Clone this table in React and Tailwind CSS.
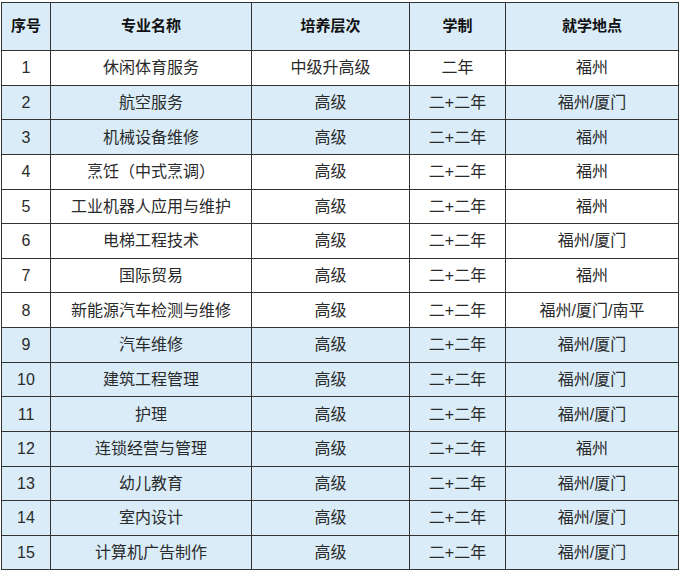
const headers = ['序号', '专业名称', '培养层次', '学制', '就学地点'];

const rows = [
  ['1', '休闲体育服务', '中级升高级', '二年', '福州', false],
  ['2', '航空服务', '高级', '二+二年', '福州/厦门', true],
  ['3', '机械设备维修', '高级', '二+二年', '福州', true],
  ['4', '烹饪（中式烹调）', '高级', '二+二年', '福州', false],
  ['5', '工业机器人应用与维护', '高级', '二+二年', '福州', false],
  ['6', '电梯工程技术', '高级', '二+二年', '福州/厦门', false],
  ['7', '国际贸易', '高级', '二+二年', '福州', false],
  ['8', '新能源汽车检测与维修', '高级', '二+二年', '福州/厦门/南平', false],
  ['9', '汽车维修', '高级', '二+二年', '福州/厦门', true],
  ['10', '建筑工程管理', '高级', '二+二年', '福州/厦门', true],
  ['11', '护理', '高级', '二+二年', '福州/厦门', true],
  ['12', '连锁经营与管理', '高级', '二+二年', '福州', true],
  ['13', '幼儿教育', '高级', '二+二年', '福州/厦门', true],
  ['14', '室内设计', '高级', '二+二年', '福州/厦门', true],
  ['15', '计算机广告制作', '高级', '二+二年', '福州/厦门', true],
];

export default function App() {
  return (
    <div className="w-[682px] h-[575px] bg-white pt-[2px] pl-[1px] font-['Liberation_Sans','Noto_Sans_CJK_SC',sans-serif] text-[#2a2a2a]">
      <div className="grid grid-cols-[48px_200px_157px_95px_172px] grid-rows-[47px] auto-rows-[33.64px] gap-px p-px bg-[#333] w-fit">
        {headers.map((h) => (
          <div key={h} className="bg-[#d9ecf8] flex items-center justify-center text-[15px] font-bold text-[#111]">
            {h}
          </div>
        ))}
        {rows.map((r) =>
          r.slice(0, 5).map((cell, i) => (
            <div
              key={r[0] + '-' + i}
              className={`${r[5] ? 'bg-[#d9ecf8]' : 'bg-white'} flex items-center justify-center text-[16px] leading-none pt-[1px]`}
            >
              {cell}
            </div>
          ))
        )}
      </div>
    </div>
  );
}
